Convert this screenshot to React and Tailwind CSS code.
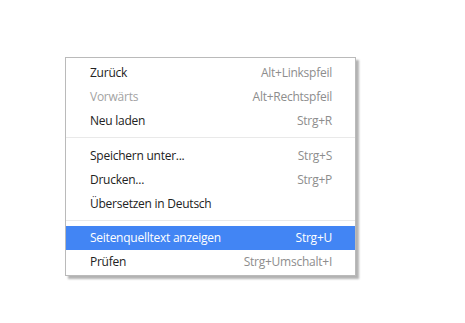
import React from 'react';

// Kontextmenü-Einträge, gruppiert nach Trennlinien
const sections = [
  [
    { label: 'Zurück', shortcut: 'Alt+Linkspfeil' },
    { label: 'Vorwärts', shortcut: 'Alt+Rechtspfeil', disabled: true },
    { label: 'Neu laden', shortcut: 'Strg+R' },
  ],
  [
    { label: 'Speichern unter...', shortcut: 'Strg+S' },
    { label: 'Drucken...', shortcut: 'Strg+P' },
    { label: 'Übersetzen in Deutsch' },
  ],
  [
    { label: 'Seitenquelltext anzeigen', shortcut: 'Strg+U', active: true },
    { label: 'Prüfen', shortcut: 'Strg+Umschalt+I' },
  ],
];

const MenuItem = ({ label, shortcut, disabled, active }) => {
  let labelColor = 'text-[#222222]';
  let shortcutColor = 'text-[#8d8d8d]';
  if (disabled) {
    labelColor = 'text-[#a3a3a3]';
  }
  if (active) {
    labelColor = 'text-white';
    shortcutColor = 'text-white';
  }

  return (
    <div
      className={`flex h-[24px] items-center justify-between pl-[24px] pr-[23px] ${
        active ? 'bg-[#4285f4]' : ''
      }`}
    >
      <span className={labelColor}>{label}</span>
      {shortcut && <span className={shortcutColor}>{shortcut}</span>}
    </div>
  );
};

export default function App() {
  return (
    <div className="min-h-[323px] w-[465px] bg-white pl-[65px] pt-[57px]">
      <div
        className="w-[291px] border border-[#bababa] bg-white pb-[1px] pt-[3px] text-[12px] leading-none tracking-[-0.25px] shadow-[3px_3px_2px_rgba(0,0,0,0.3)]"
        style={{ fontFamily: '"Open Sans", "Noto Sans", sans-serif' }}
      >
        {sections.map((items, i) => (
          <div key={i}>
            {i > 0 && (
              <div className={i === 1 ? 'pb-[6px] pt-[4px]' : 'pb-[5px] pt-[4px]'}>
                <div className="h-px bg-[#e9e9e9]" />
              </div>
            )}
            {items.map((item) => (
              <MenuItem key={item.label} {...item} />
            ))}
          </div>
        ))}
      </div>
    </div>
  );
}
